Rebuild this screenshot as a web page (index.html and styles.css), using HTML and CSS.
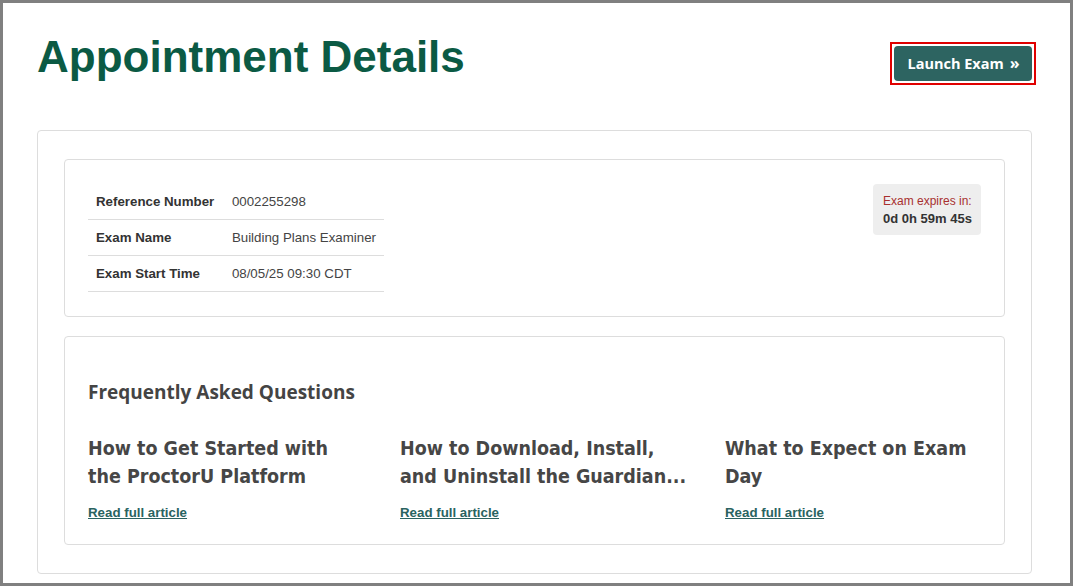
FILE: index.html
```html
<!DOCTYPE html>
<html lang="en">
<head>
<meta charset="utf-8">
<title>Appointment Details</title>
<link rel="stylesheet" href="styles.css">
</head>
<body>
<div class="frame">
  <header class="page-header">
    <h1 class="page-title">Appointment Details</h1>
    <div class="launch-focus">
      <button class="launch-btn" type="button">Launch Exam <span class="launch-arrow">&raquo;</span></button>
    </div>
  </header>

  <main class="outer-card">
    <section class="card details-card">
      <table class="details-table">
        <tr><th>Reference Number</th><td>0002255298</td></tr>
        <tr><th>Exam Name</th><td>Building Plans Examiner</td></tr>
        <tr><th>Exam Start Time</th><td>08/05/25 09:30 CDT</td></tr>
      </table>
      <div class="expires">
        <div class="expires-label">Exam expires in:</div>
        <div class="expires-time">0d 0h 59m 45s</div>
      </div>
    </section>

    <section class="card faq-card">
      <h2 class="faq-title">Frequently Asked Questions</h2>
      <div class="faq-grid">
        <article class="faq-item">
          <h3 class="faq-heading">How to Get Started with the ProctorU Platform</h3>
          <a class="faq-link" href="#">Read full article</a>
        </article>
        <article class="faq-item">
          <h3 class="faq-heading">How to Download, Install, and Uninstall the Guardian...</h3>
          <a class="faq-link" href="#">Read full article</a>
        </article>
        <article class="faq-item">
          <h3 class="faq-heading">What to Expect on Exam Day</h3>
          <a class="faq-link" href="#">Read full article</a>
        </article>
      </div>
    </section>
  </main>
</div>
</body>
</html>
```

FILE: styles.css
```css
* { box-sizing: border-box; }

html, body {
  margin: 0;
  padding: 0;
  background: #ffffff;
}

body {
  font-family: "Liberation Sans", Arial, sans-serif;
  color: #333333;
}

.frame {
  width: 1073px;
  height: 586px;
  border: 3px solid #808080;
  padding: 30px 34px 0 34px;
  overflow: hidden;
}

.page-header {
  display: flex;
  justify-content: space-between;
  align-items: flex-start;
}

.page-title {
  margin: 0;
  font-family: "Liberation Sans", Arial, sans-serif;
  font-weight: 700;
  font-size: 44px;
  line-height: 48px;
  color: #0b5a44;
}

.launch-focus {
  margin-top: 9px;
  border: 2px solid #e00000;
  padding: 2px;
  display: flex;
}

.launch-btn {
  width: 138px;
  height: 35px;
  border: 0;
  border-radius: 4px;
  background: #2d6461;
  color: #ffffff;
  font-family: "Open Sans", "Noto Sans", sans-serif;
  font-weight: 700;
  font-size: 14.5px;
  padding: 0 0 0 1px;
  display: flex;
  align-items: center;
  justify-content: center;
  gap: 6px;
  white-space: nowrap;
}

.launch-arrow {
  font-size: 16px;
  line-height: 1;
  position: relative;
  top: -1px;
}

.outer-card {
  margin-top: 45px;
  margin-right: 4px;
  border: 1px solid #dddddd;
  border-radius: 4px;
  padding: 28px 26px;
  display: flex;
  flex-direction: column;
  gap: 19px;
}

.card {
  border: 1px solid #dddddd;
  border-radius: 4px;
}

.details-card {
  padding: 24px 23px;
  display: flex;
  justify-content: space-between;
  align-items: flex-start;
}

.details-table {
  border-collapse: collapse;
  width: 296px;
  font-size: 13.3px;
  line-height: 20px;
}

.details-table th,
.details-table td {
  padding: 8px 8px 7px 8px;
  border-bottom: 1px solid #dddddd;
  text-align: left;
  vertical-align: top;
  white-space: nowrap;
}

.details-table th {
  width: 136px;
  font-weight: 700;
  color: #333333;
}

.details-table td {
  font-weight: 400;
  color: #444444;
}

.expires {
  background: #eeeeee;
  border-radius: 4px;
  padding: 9px 9px 8px 10px;
  line-height: 17px;
  width: 108px;
}

.expires-label {
  font-size: 12px;
  color: #a8302e;
}

.expires-time {
  font-size: 13px;
  font-weight: 700;
  color: #333333;
}

.faq-card {
  padding: 43px 23px 21px 23px;
}

.faq-title {
  margin: 0;
  font-family: "Open Sans", "Noto Sans", sans-serif;
  font-weight: 700;
  font-size: 19px;
  line-height: 24px;
  color: #444444;
}

.faq-grid {
  margin-top: 31px;
  display: grid;
  grid-template-columns: 275px 288px 1fr;
  column-gap: 37px;
}

.faq-heading {
  margin: 0;
  font-family: "DejaVu Sans Condensed", "DejaVu Sans", sans-serif;
  font-weight: 700;
  font-size: 19.5px;
  line-height: 28px;
  color: #464646;
}

.faq-link {
  display: inline-block;
  margin-top: 12px;
  font-size: 13.3px;
  line-height: 20px;
  font-weight: 700;
  color: #2a6361;
  text-decoration: underline;
}
```
